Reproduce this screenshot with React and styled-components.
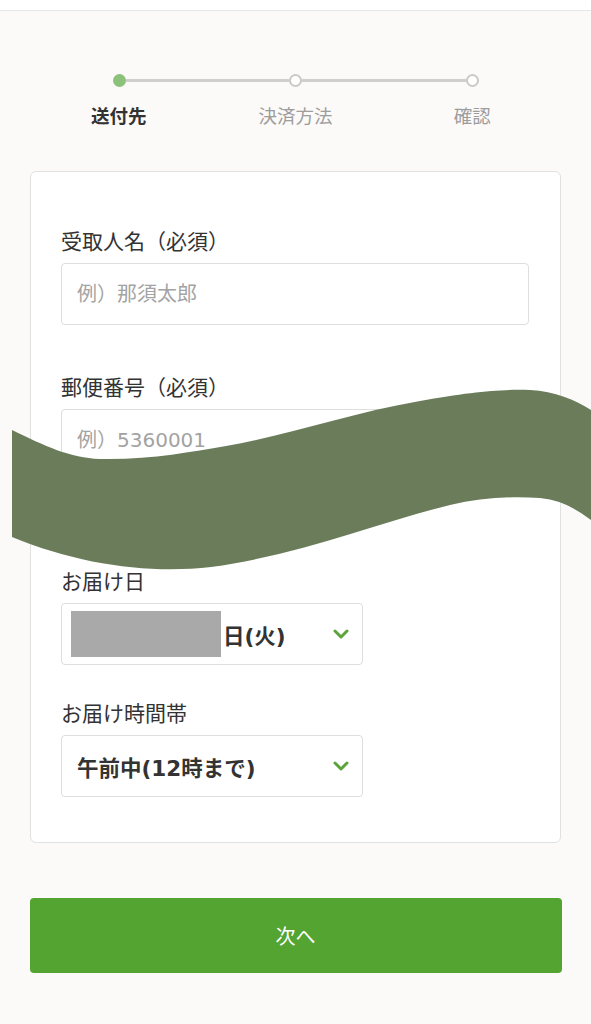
import React from "react";
import styled, { createGlobalStyle } from "styled-components";

const Global = createGlobalStyle`
  html, body { margin: 0; padding: 0; background: #fbfaf8; }
  body { font-family: "Liberation Sans", "Noto Sans CJK JP", sans-serif; color: #333; }
  * { box-sizing: border-box; }
`;

const Page = styled.div`
  position: relative;
  width: 591px;
  min-height: 1024px;
  background: #fbfaf8;
  overflow: hidden;
`;

const TopBar = styled.div`
  height: 11px;
  background: #fff;
  border-bottom: 1px solid #e7e7e7;
`;

const Stepper = styled.div`
  width: 530px;
  margin: 63px auto 0;
`;

const Track = styled.div`
  display: flex;
  align-items: center;
  padding: 0 82px;
  height: 13px;
`;

const Dot = styled.span`
  width: 13px;
  height: 13px;
  border-radius: 50%;
  flex: none;
  background: ${(p) => (p.$active ? "#8cc17a" : "#fff")};
  border: ${(p) => (p.$active ? "none" : "2.5px solid #c9c9c9")};
`;

const Line = styled.span`
  flex: 1;
  height: 3px;
  background: #cecece;
`;

const Labels = styled.div`
  display: grid;
  grid-template-columns: repeat(3, 1fr);
  margin-top: 17px;
`;

const StepLabel = styled.div`
  text-align: center;
  font-size: 18.5px;
  line-height: 26px;
  font-weight: ${(p) => (p.$active ? 700 : 400)};
  color: ${(p) => (p.$active ? "#333" : "#9d9d9d")};
`;

const Card = styled.div`
  width: 531px;
  margin: 41px auto 0;
  background: #fff;
  border: 1px solid #e1e1e1;
  border-radius: 6px;
  padding: 56px 31px 45px 30px;
`;

const Field = styled.div`
  display: flex;
  flex-direction: column;
  align-items: flex-start;
  gap: 7px;
  margin-top: ${(p) => p.$gap || 0}px;
`;

const Label = styled.div`
  font-size: 21px;
  line-height: 28px;
  color: #333;
`;

const TextInput = styled.input`
  width: 100%;
  height: 62px;
  border: 1.5px solid #dedede;
  border-radius: 4px;
  background: #fff;
  padding: 0 15px;
  font-family: "DejaVu Sans", "Noto Sans CJK JP", sans-serif;
  font-size: 20px;
  color: #333;
  outline: none;
  &::placeholder { color: #a3a3a3; }
`;

const Select = styled.div`
  width: 302px;
  height: 62px;
  border: 1.5px solid #dedede;
  border-radius: 4px;
  background: #fff;
  display: flex;
  align-items: center;
  justify-content: space-between;
  padding: 0 13px 0 15px;
`;

const SelectValue = styled.div`
  display: flex;
  align-items: center;
  font-family: "DejaVu Sans", "Noto Sans CJK JP", sans-serif;
  font-size: 21.5px;
  font-weight: 700;
  color: #333;
`;

const Redact = styled.span`
  display: inline-block;
  width: 150px;
  height: 46px;
  margin-left: -6px;
  margin-right: 2px;
  background: #a9a9a9;
`;

const NextButton = styled.button`
  display: block;
  width: 532px;
  height: 75px;
  margin: 55px auto 0;
  border: none;
  border-radius: 4px;
  background: #53a431;
  color: #fff;
  font-family: "Liberation Sans", "Noto Sans CJK JP", sans-serif;
  font-size: 20px;
`;

const WaveLayer = styled.svg`
  position: absolute;
  left: 0;
  top: 0;
  width: 591px;
  height: 1024px;
  pointer-events: none;
`;

const Chevron = () => (
  <svg width="16" height="10" viewBox="0 0 16 10">
    <polyline points="2,2 8,8 14,2" fill="none" stroke="#5aa43a" strokeWidth="3" strokeLinecap="round" strokeLinejoin="round" />
  </svg>
);

export default function App() {
  return (
    <Page>
      <Global />
      <TopBar />
      <Stepper>
        <Track>
          <Dot $active />
          <Line />
          <Dot />
          <Line />
          <Dot />
        </Track>
        <Labels>
          <StepLabel $active>送付先</StepLabel>
          <StepLabel>決済方法</StepLabel>
          <StepLabel>確認</StepLabel>
        </Labels>
      </Stepper>
      <Card>
        <Field>
          <Label>受取人名（必須）</Label>
          <TextInput placeholder="例）那須太郎" />
        </Field>
        <Field $gap={49}>
          <Label>郵便番号（必須）</Label>
          <TextInput placeholder="例）5360001" />
        </Field>
        <Field $gap={97}>
          <Label>お届け日</Label>
          <Select>
            <SelectValue>
              <Redact />
              日(火)
            </SelectValue>
            <Chevron />
          </Select>
        </Field>
        <Field $gap={35}>
          <Label>お届け時間帯</Label>
          <Select>
            <SelectValue>午前中(12時まで)</SelectValue>
            <Chevron />
          </Select>
        </Field>
      </Card>
      <NextButton>次へ</NextButton>
      <WaveLayer viewBox="0 0 591 1024">
        <path
          d="M12,430 C45,446 70,458 100,459 C150,460 190,452 226,446 C290,435 350,413 420,401 C470,392 500,389 530,390 C555,391 575,400 591,410 L591,520 C575,508 560,500 540,498 C510,496 480,498 450,505 C380,522 300,555 211,567 C150,574 80,565 12,537 Z"
          fill="#6b7c5a"
        />
      </WaveLayer>
    </Page>
  );
}
